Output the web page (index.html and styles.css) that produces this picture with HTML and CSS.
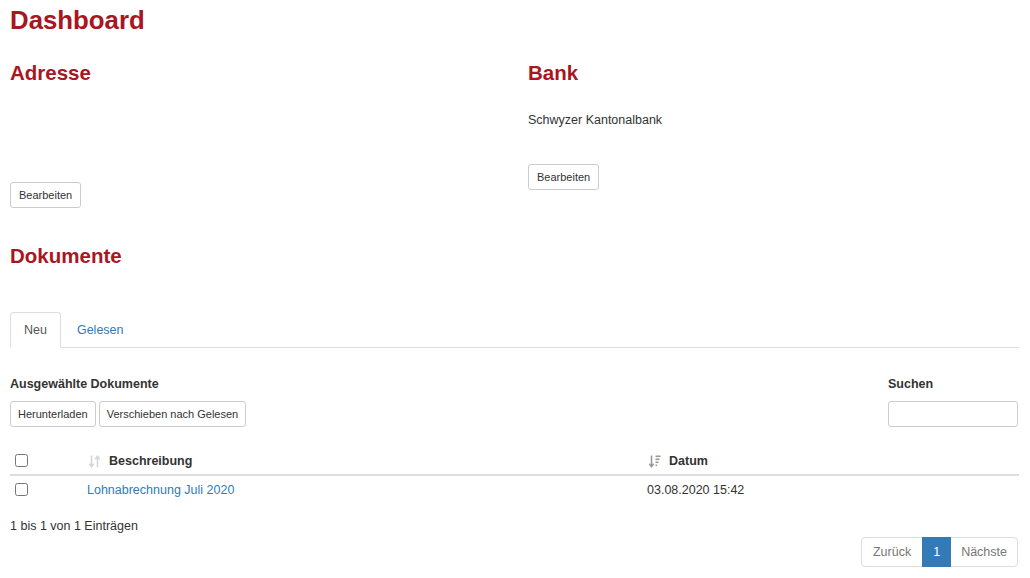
FILE: index.html
```html
<!DOCTYPE html>
<html lang="de">
<head>
    <meta charset="UTF-8">
    <meta name="viewport" content="width=device-width, initial-scale=1.0">
    <title>Dashboard</title>
    <link rel="stylesheet" href="styles.css">
</head>
<body>
    <h1 class="page-title">Dashboard</h1>

    <div class="info-row">
        <div class="info-col">
            <h2 class="section-title">Adresse</h2>
            <div class="address"></div>
            <button class="btn">Bearbeiten</button>
        </div>
        <div class="info-col">
            <h2 class="section-title">Bank</h2>
            <p class="bank-name">Schwyzer Kantonalbank</p>
            <button class="btn">Bearbeiten</button>
        </div>
    </div>

    <h2 class="section-title docs-title">Dokumente</h2>

    <ul class="tabs">
        <li class="tab active"><a href="#">Neu</a></li>
        <li class="tab"><a href="#">Gelesen</a></li>
    </ul>

    <div class="toolbar">
        <div class="toolbar-left">
            <div class="toolbar-label">Ausgewählte Dokumente</div>
            <div class="btn-group">
                <button class="btn">Herunterladen</button>
                <button class="btn">Verschieben nach Gelesen</button>
            </div>
        </div>
        <div class="toolbar-right">
            <label class="toolbar-label" for="search">Suchen</label>
            <input type="text" id="search" class="search-input">
        </div>
    </div>

    <table class="doc-table">
        <colgroup>
            <col class="col-check">
            <col class="col-desc">
            <col class="col-date">
        </colgroup>
        <thead>
            <tr>
                <th class="check-cell"><input type="checkbox"></th>
                <th class="sortable">
                    <svg class="sort-icon" width="12" height="13" viewBox="0 0 12 13">
                        <g fill="none" stroke="#d6d6d6" stroke-width="1.6">
                            <path d="M2.5 0.5v11"/>
                            <path d="M0.3 8.8l2.2 2.8l2.2-2.8"/>
                            <path d="M8.5 12.5v-11"/>
                            <path d="M6.3 4.2l2.2-2.8l2.2 2.8"/>
                        </g>
                    </svg>
                    Beschreibung
                </th>
                <th class="sortable">
                    <svg class="sort-icon" width="12" height="13" viewBox="0 0 12 13">
                        <g fill="none" stroke="#9a9a9a" stroke-width="1.6">
                            <path d="M2.5 0.5v11"/>
                            <path d="M0.3 8.8l2.2 2.8l2.2-2.8"/>
                        </g>
                        <g fill="#9a9a9a">
                            <rect x="6.5" y="0.5" width="5" height="1.6"/>
                            <rect x="6.5" y="3.5" width="4" height="1.6"/>
                            <rect x="6.5" y="6.5" width="3" height="1.6"/>
                            <rect x="6.5" y="9.5" width="1.6" height="1.6"/>
                        </g>
                    </svg>
                    Datum
                </th>
            </tr>
        </thead>
        <tbody>
            <tr>
                <td class="check-cell"><input type="checkbox"></td>
                <td><a href="#">Lohnabrechnung Juli 2020</a></td>
                <td>03.08.2020 15:42</td>
            </tr>
        </tbody>
    </table>

    <div class="table-info">1 bis 1 von 1 Einträgen</div>

    <div class="pager-row">
        <ul class="pagination">
            <li class="disabled"><a href="#">Zurück</a></li>
            <li class="active"><a href="#">1</a></li>
            <li class="disabled"><a href="#">Nächste</a></li>
        </ul>
    </div>
</body>
</html>
```

FILE: styles.css
```css
body {
    margin: 0;
    padding: 0 11px 0 10px;
    font-family: "Liberation Sans", Arial, Helvetica, sans-serif;
    font-size: 12.5px;
    line-height: 18px;
    color: #333;
    background: #fff;
}

a {
    color: #337ab7;
    text-decoration: none;
}

.page-title {
    margin: 6px 0 0;
    font-size: 25.8px;
    line-height: 28px;
    font-weight: bold;
    color: #a8161f;
}

.section-title {
    margin: 0;
    font-size: 20.5px;
    line-height: 22px;
    font-weight: bold;
    color: #a8161f;
}

.info-row {
    display: grid;
    grid-template-columns: 1fr 1fr;
    column-gap: 27px;
    margin-top: 28px;
    align-items: start;
}

.address {
    margin: 28px 0 35px;
    min-height: 35px;
}

.bank-name {
    margin: 27px 0 35px;
}

.btn {
    display: inline-block;
    margin: 0;
    padding: 5px 7px;
    font-family: inherit;
    font-size: 11px;
    line-height: 14px;
    color: #333;
    background: #fff;
    border: 1px solid #ccc;
    border-radius: 3px;
    cursor: pointer;
}

.info-col .btn {
    padding: 5px 8px;
}

.docs-title {
    margin-top: 37px;
}

.tabs {
    display: flex;
    margin: 45px 0 0;
    padding: 0;
    list-style: none;
    border-bottom: 1px solid #ddd;
}

.tab {
    margin-bottom: -1px;
    margin-right: 2px;
}

.tab a {
    display: block;
    padding: 8px 13px;
    line-height: 18px;
    border: 1px solid transparent;
    border-radius: 4px 4px 0 0;
}

.tab.active a {
    color: #555;
    background: #fff;
    border-color: #ddd #ddd transparent;
}

.toolbar {
    display: flex;
    justify-content: space-between;
    margin-top: 27px;
}

.toolbar-label {
    display: block;
    font-weight: bold;
    margin-bottom: 8px;
}

.btn-group {
    display: flex;
    gap: 3px;
}

.search-input {
    display: block;
    box-sizing: border-box;
    width: 130px;
    height: 26px;
    margin: 0 1px 0 0;
    padding: 3px 6px;
    border: 1px solid #ccc;
    border-radius: 3px;
    font: inherit;
}

.doc-table {
    width: 100%;
    margin-top: 20px;
    border-collapse: collapse;
    table-layout: fixed;
}

.col-check {
    width: 69px;
}

.col-date {
    width: 380px;
}

.doc-table th,
.doc-table td {
    padding: 5px 8px;
    text-align: left;
    vertical-align: middle;
}

.doc-table th {
    padding-bottom: 4px;
    font-weight: bold;
    border-bottom: 2px solid #ddd;
}

.doc-table th.sortable {
    position: relative;
    padding-left: 30px;
}

.sort-icon {
    position: absolute;
    left: 10px;
    top: 8px;
}

.doc-table .check-cell {
    padding-left: 5px;
}

.check-cell input {
    margin: 0;
    width: 13px;
    height: 13px;
    vertical-align: -2px;
}

.table-info {
    margin-top: 13px;
}

.pager-row {
    display: flex;
    justify-content: flex-end;
    margin-top: 2px;
}

.pagination {
    display: flex;
    margin: 0 1px 0 0;
    padding: 0;
    list-style: none;
}

.pagination li a {
    display: block;
    padding: 5px 10px;
    line-height: 18px;
    color: #777;
    background: #fff;
    border: 1px solid #ddd;
    margin-left: -1px;
}

.pagination li:first-child a {
    margin-left: 0;
    padding: 5px 11px;
    border-radius: 4px 0 0 4px;
}

.pagination li:last-child a {
    border-radius: 0 4px 4px 0;
}

.pagination li.active a {
    color: #fff;
    background: #337ab7;
    border-color: #337ab7;
    position: relative;
}
```
